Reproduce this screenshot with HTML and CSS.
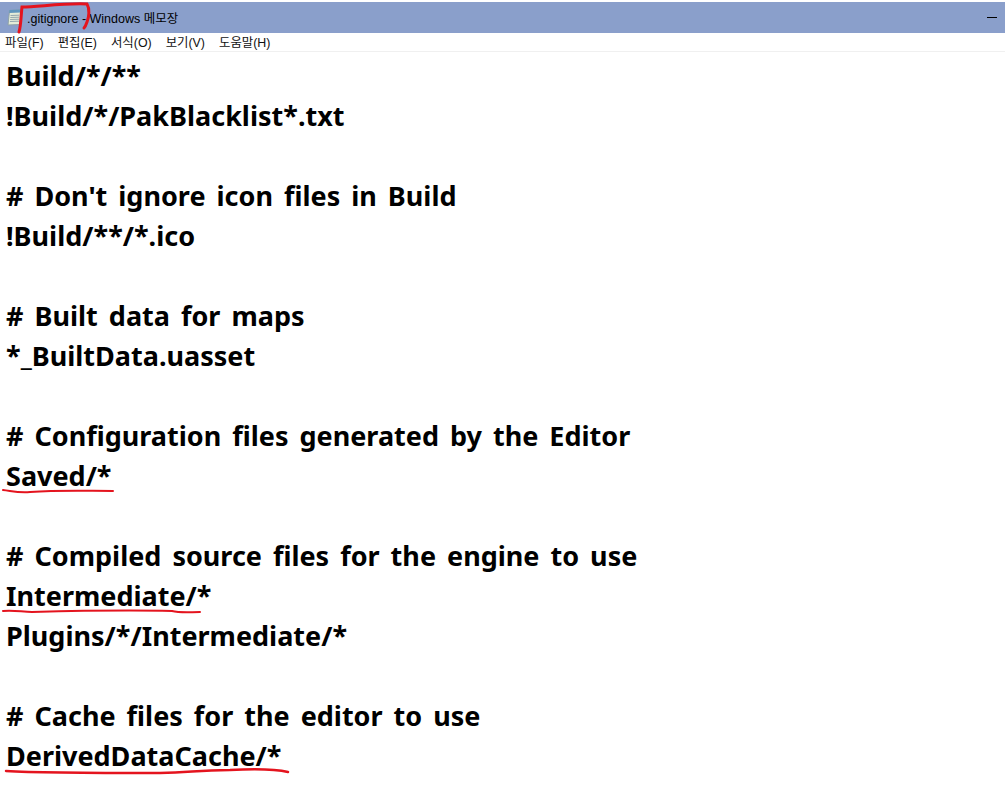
FILE: index.html
```html
<!DOCTYPE html>
<html lang="ko">
<head>
<meta charset="utf-8">
<title>.gitignore - Windows 메모장</title>
<link rel="stylesheet" href="styles.css">
</head>
<body>
<div class="window">
  <header class="titlebar">
    <svg class="app-icon" width="15" height="17" viewBox="0 0 15 17">
      <path d="M2.5 1.5 L13.5 1 L13 15.5 L1 16 Z" fill="#e4ecd8" stroke="#8fa3a8"/>
      <path d="M2.5 1 L13.5 .5 L13.5 3.5 L2.2 4 Z" fill="#5f95bd"/>
      <path d="M3.5 6.5 L12 6.2 M3.3 8.5 L12 8.2 M3.1 10.5 L12 10.2 M2.9 12.5 L12 12.2" stroke="#93a7ae" fill="none"/>
    </svg>
    <span class="title">.gitignore - Windows 메모장</span>
    <span class="minimize"></span>
  </header>
  <nav class="menubar">
    <span>파일(F)</span><span>편집(E)</span><span>서식(O)</span><span>보기(V)</span><span>도움말(H)</span>
  </nav>
  <main class="content">
    <div>Build/*/**</div>
    <div>!Build/*/PakBlacklist*.txt</div>
    <div>&nbsp;</div>
    <div># Don't ignore icon files in Build</div>
    <div>!Build/**/*.ico</div>
    <div>&nbsp;</div>
    <div># Built data for maps</div>
    <div>*_BuiltData.uasset</div>
    <div>&nbsp;</div>
    <div># Configuration files generated by the Editor</div>
    <div>Saved/*</div>
    <div>&nbsp;</div>
    <div># Compiled source files for the engine to use</div>
    <div>Intermediate/*</div>
    <div>Plugins/*/Intermediate/*</div>
    <div>&nbsp;</div>
    <div># Cache files for the editor to use</div>
    <div>DerivedDataCache/*</div>
  </main>
  <svg class="marks" width="1005" height="785" viewBox="0 0 1005 785" fill="none" stroke="#e4141e" stroke-linecap="round" stroke-width="2">
    <path d="M19 32 C21 26 21 15 22 7 C38 7 62 3 87 4 C90 9 89 17 87 22 C86 25 85 27 84 28" stroke-width="3"/>
    <path d="M3 490 C12 491 18 493 30 492 C60 490 85 491 113 491"/>
    <path d="M3 611 C15 610 22 612 32 612 C70 611 130 610 172 611 C180 613 190 612 200 612"/>
    <path d="M6 771 C40 773 100 773 160 773 C190 773 195 770 230 770 C250 769 275 769 288 772" stroke-width="2.5"/>
  </svg>
</div>
</body>
</html>
```

FILE: styles.css
```css
html, body {
  margin: 0;
  padding: 0;
  background: #fff;
}
.window {
  position: relative;
  width: 1005px;
  height: 785px;
  overflow: hidden;
  padding-top: 2px;
  box-sizing: border-box;
}
.titlebar {
  display: flex;
  align-items: center;
  height: 31px;
  background: #8a9fcb;
  padding: 0 7px 0 7px;
  box-sizing: border-box;
  font: 12.5px "Liberation Sans", "Noto Sans CJK KR", sans-serif;
  color: #000;
}
.app-icon {
  flex: none;
  margin-right: 5px;
}
.title {
  flex: 1;
}
.minimize {
  width: 10px;
  height: 1px;
  background: #000;
  margin-right: 1px;
}
.menubar {
  display: flex;
  gap: 14px;
  height: 19px;
  padding: 0 0 1px 5px;
  align-items: center;
  border-bottom: 1px solid #f0f0f0;
  box-sizing: border-box;
  font: 12.4px "Liberation Sans", "Noto Sans CJK KR", sans-serif;
  color: #111;
}
.content {
  padding: 4px 0 0 6px;
  font: 700 27px/40px "Noto Sans", "Noto Sans CJK KR", sans-serif;
  word-spacing: 4px;
  color: #000;
}
.content div {
  white-space: pre;
}
.marks {
  position: absolute;
  left: 0;
  top: 0;
  pointer-events: none;
}
```
